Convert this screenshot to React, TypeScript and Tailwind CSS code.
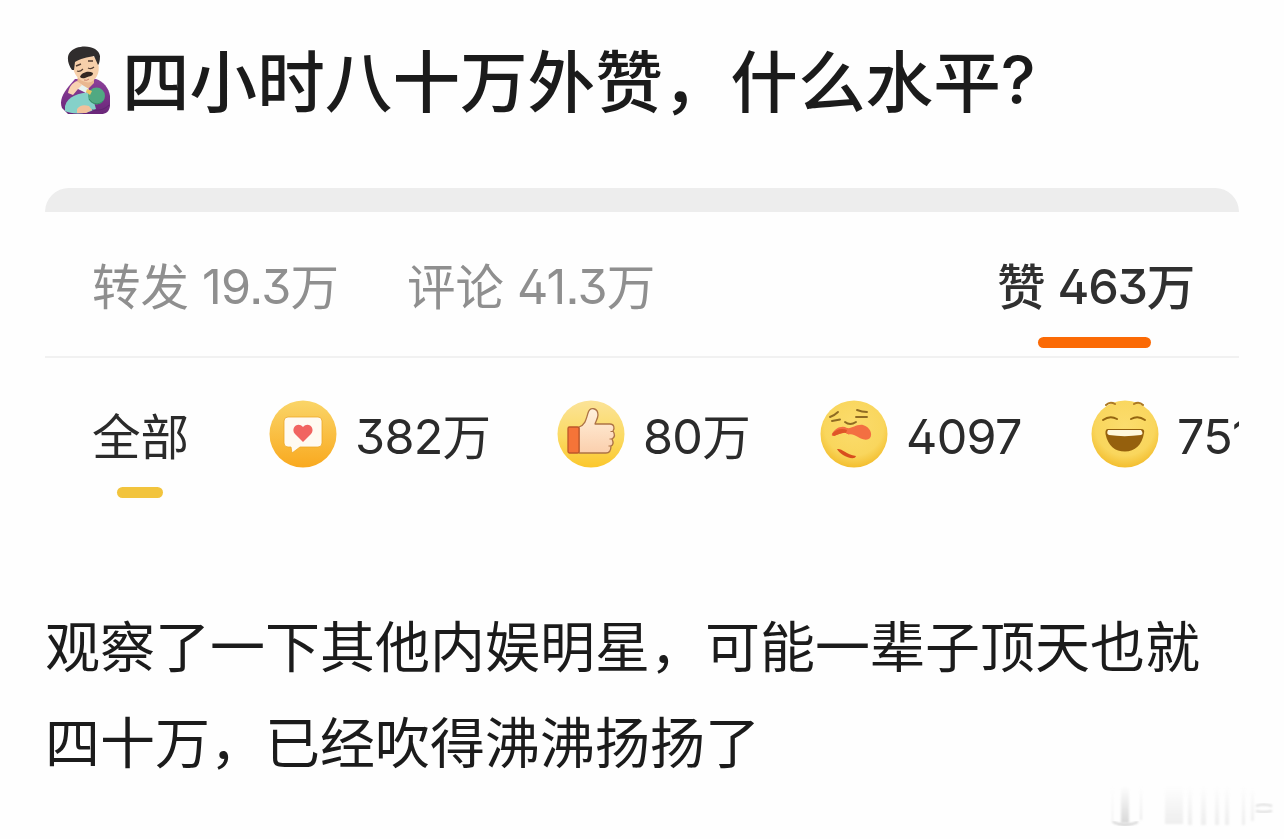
import type { ReactNode } from "react";

type TReaction = {
	icon: ReactNode;
	count: string;
	unit?: string;
	width: string;
};

const CJK = "font-['Noto_Sans_CJK_SC',sans-serif]";
const NUM = "font-[Inter,'Noto_Sans_CJK_SC',sans-serif] [font-feature-settings:'cv09','cv02','ss07']";

export default function App() {
	return (
		<main className={`h-[839px] w-[1284px] overflow-hidden bg-[#fefefe] ${CJK} text-[#1b1b1b]`}>
			<h1 className="flex h-[188px] items-start pl-[58px] pt-[29px] text-[67.6px] font-medium leading-[98px] whitespace-nowrap">
				<ParentIcon />
				<span className="ml-[8px]">四小时八十万外赞，什么水平</span>
				<span className="font-[Inter,sans-serif] text-[66px] leading-[102px]">?</span>
			</h1>

			<section className="ml-[45px] h-[397px] w-[1194px] overflow-hidden">
				<div className="h-[24px] rounded-t-[24px] bg-[#ededed]" />
				<Stats />
				<Reactions />
			</section>

			<p className="ml-[45px] mt-[10px] h-[191px] w-[1175px] text-[55px] leading-[96px]">
				观察了一下其他内娱明星，可能一辈子顶天也就四十万，已经吹得沸沸扬扬了
			</p>
			<Watermark />
		</main>
	);
}

function Stats() {
	return (
		<div className="flex h-[146px] items-start border-b-2 border-[#f1f1f1] pl-[47px] pt-[36px] text-[48.5px] leading-[72px] whitespace-nowrap text-[#8f8f8f]">
			<div className="flex w-[315px]">
				<span>转发</span>
				<span className={`ml-[13px] mt-[3px] tracking-[-0.7px] ${NUM}`}>19.3</span>
				<span>万</span>
			</div>
			<div className="flex w-[590px]">
				<span>评论</span>
				<span className={`ml-[13px] mt-[3px] tracking-[-0.8px] ${NUM}`}>41.3</span>
				<span>万</span>
			</div>
			<div className="relative flex font-medium text-[#303030]">
				<span>赞</span>
				<span className={`ml-[12px] mt-[3px] tracking-[-1.2px] ${NUM}`}>463</span>
				<span>万</span>
				<i className="absolute left-[41px] top-[89px] h-[11px] w-[113px] rounded-full bg-[#fb6a05]" />
			</div>
		</div>
	);
}

function Reactions() {
	return (
		<div className="flex h-[140px] items-start pl-[47px] pt-[40px] text-[48.5px] leading-[72px] whitespace-nowrap text-[#2b2b2b]">
			<div className="relative w-[177px] shrink-0">
				全部
				<i className="absolute left-[25px] top-[89px] h-[11px] w-[46px] rounded-full bg-[#f2c43d]" />
			</div>
			{REACTIONS.map((item) => (
				<div key={item.count} className={`flex shrink-0 ${item.width}`}>
					<svg className="mt-[2px] h-[68px] w-[68px] shrink-0" viewBox="0 0 68 68">
						{item.icon}
					</svg>
					<span className={`ml-[18px] mt-[3px] tracking-[-0.7px] ${NUM}`}>{item.count}</span>
					{item.unit && <span>{item.unit}</span>}
				</div>
			))}
		</div>
	);
}

function ParentIcon() {
	return (
		<svg className="mt-[16px] h-[70px] w-[56px] shrink-0" viewBox="0 0 56 70">
			<defs>
				<linearGradient id="shirt" x1="0" y1="0" x2="0" y2="1">
					<stop stopColor="#8b409a" />
					<stop offset="1" stopColor="#6a2679" />
				</linearGradient>
			</defs>
			<path d="M4 63C1 56 5 48 11 41L17 34L38 34C45 36 51 43 52 51L52 61C51 67 48 69 43 69H10Z" fill="url(#shirt)" />
			<path d="M20 29h16v9l-8 8-9-6Z" fill="#e9b790" />
			<path d="M15 13C18 8 36 8 39 15C43 24 40 34 33 37C26 39 17 33 15 23Z" fill="#f6cfaa" />
			<path d="M14 25C8 16 8 7 18 3C29-1 41 3 42 11C42 16 41 19 40 20L36 11C30 12 21 14 17 17L16 25Z" fill="#302d2d" />
			<path d="M18 21l5-2M30 16l5 0" fill="none" stroke="#523d31" strokeWidth="1.4" />
			<path d="M19 26c2 1 4 0 6-2M30 23c2 1 4 1 6-1" fill="none" stroke="#523d31" strokeWidth="1.1" />
			<path d="M22 32C23 28 30 25 35 28C35 32 30 31 27 33Q24 34 22 32Z" fill="#332722" />
			<path d="M26 35q3 1 5-1" fill="none" stroke="#c87e6c" />
			<path d="M7 61C10 51 20 48 33 47L38 64C27 70 13 69 7 66Z" fill="#85d1c9" />
			<circle cx="38.5" cy="51" r="8.5" fill="#50a982" />
			<path d="M31 54c4 6 10 6 14 2" fill="none" stroke="#368b69" />
			<path d="M21 38l10 6-3 4-10-5Z" fill="#e8f4f2" />
			<path d="M29 44l5 2-2 4-4-3Z" fill="#edc563" />
			<path d="M10 48C11 42 14 38 19 36L24 40L20 44L15 50Z" fill="#f8d2b1" />
			<path d="M19 64c4-5 8-4 12-3l3 4-6 3h-9Z" fill="#f2c19c" />
			<path d="M34 65c8 1 13-1 17-5" fill="none" stroke="#602471" />
		</svg>
	);
}

function HeartIcon() {
	return (
		<>
			<defs>
				<linearGradient id="orange" x1="0" y1="0" x2="0" y2="1">
					<stop stopColor="#fad568" />
					<stop offset="1" stopColor="#f9a91f" />
				</linearGradient>
			</defs>
			<circle cx="34" cy="34" r="33.5" fill="url(#orange)" />
			<path d="M19 17H49Q53 17 53 21V43Q53 47 49 47H31L23 53L22 47H19Q15 47 15 43V21Q15 17 19 17Z" fill="#fffaf1" stroke="#eda827" strokeWidth=".8" />
			<path d="M34 42L26 34C21 28 29 21 34 27C39 21 47 28 42 34Z" fill="#f16460" />
		</>
	);
}

function ThumbIcon() {
	return (
		<>
			<defs>
				<linearGradient id="yellow" x1="0" y1="0" x2="0" y2="1">
					<stop stopColor="#fbe398" />
					<stop offset=".55" stopColor="#fbda62" />
					<stop offset="1" stopColor="#fbc72c" />
				</linearGradient>
				<linearGradient id="hand" x1="0" y1="0" x2="0" y2="1">
					<stop stopColor="#fff1dc" />
					<stop offset="1" stopColor="#fbcfad" />
				</linearGradient>
			</defs>
			<circle cx="34" cy="34" r="33.5" fill="url(#yellow)" />
			<path d="M22 27C28 25 29 20 31 13C33 6 41 8 41 15C41 18 39 21 38 24H53C57 24 58 28 56 31C58 34 58 37 55 39C57 43 56 45 54 46C54 51 52 53 49 53H22Z" fill="url(#hand)" stroke="#ad7346" strokeWidth="1.3" strokeLinejoin="round" />
			<path d="M56 31.5h-2.5M55 39h-2.5M54 46h-2.5" stroke="#ad7346" />
			<rect x="11" y="27" width="11" height="26" rx="1.5" fill="#f57438" stroke="#bd562a" strokeWidth="1.3" />
		</>
	);
}

function FaceBase({ id }: { id: string }) {
	return (
		<>
			<defs>
				<radialGradient id={id} cx="50%" cy="38%" r="65%">
					<stop stopColor="#fbdc6d" />
					<stop offset=".68" stopColor="#f9d65d" />
					<stop offset="1" stopColor="#f2ba27" />
				</radialGradient>
			</defs>
			<circle cx="34" cy="34" r="33.5" fill={`url(#${id})`} />
		</>
	);
}

function CryIcon() {
	return (
		<>
			<FaceBase id="cry" />
			<path d="M10 17Q15 15 18 12M12 21L20 19.5M37 10Q42 12 47 12M36 17H47M25 22Q30 26 36 22" fill="none" stroke="#8f6b23" strokeWidth="1.9" strokeLinecap="round" />
			<path d="M12 34C15 28 22 25 27 28C32 29 36 24 43 25C50 27 53 34 50 38C46 42 40 38 34 35C30 33 28 36 26 33C22 32 18 35 14 36Q11 36 12 34Z" fill="#f36f42" />
			<path d="M12 34C16 29 22 28 27 30L26 33C22 32 18 35 14 36Z" fill="#df5527" />
			<path d="M17 49C22 48 25 54 36 56C35 60 28 58 23 55C20 53 18 51 17 49Z" fill="#d84e1d" />
		</>
	);
}

function LaughIcon() {
	return (
		<>
			<FaceBase id="laugh" />
			<path d="M15 5Q19 1 24 4M43 4Q48 1 52 5" fill="none" stroke="#ad7a25" strokeWidth="2" strokeLinecap="round" />
			<path d="M12 20Q19 15 26 19M40 19Q47 15 54 20" fill="none" stroke="#946510" strokeWidth="2" strokeLinecap="round" />
			<path d="M17 29H50Q54 29 53 33C51 45 44 51.5 34 51.5C24 51.5 17 46 14.5 34Q14 29 17 29Z" fill="#95600d" />
			<path d="M17 30H50Q53 34 50 35C39 36.5 28 36.5 18 35Q15 34 17 30Z" fill="#fff8dc" />
		</>
	);
}

function Watermark() {
	return (
		<svg className="ml-[1108px] h-[53px] w-[176px]" viewBox="0 0 176 53">
			<defs>
				<linearGradient id="mark" x1="0" y1="0" x2="0" y2="1">
					<stop stopColor="#d4d4d4" stopOpacity="0" />
					<stop offset="1" stopColor="#d4d4d4" />
				</linearGradient>
				<filter id="soft">
					<feGaussianBlur stdDeviation="1" />
				</filter>
			</defs>
			<g fill="url(#mark)" filter="url(#soft)">
				<path d="M13 0h8v37h-8Z" opacity=".9" />
				<path d="M4 0h1v37h-1ZM32 0h2v34h-2Z" opacity=".5" />
				<path d="M57 0h18v38H57ZM80 0h4v39h-4ZM93 0h5v39h-5ZM107 0h4v39h-4ZM117 0h4v39h-4ZM134 0h3v39h-3ZM143 4h3v31h-3Z" opacity=".4" />
			</g>
			<path d="M5 36Q17 42 30 36" fill="none" stroke="#c9c9c9" filter="url(#soft)" strokeWidth="1.8" />
			<path d="M148 20q7-3 16 0M148 25q7 2 16 0" fill="none" stroke="#d0d0d0" strokeWidth="1.5" filter="url(#soft)" />
		</svg>
	);
}

const REACTIONS: TReaction[] = [
	{ icon: <HeartIcon />, count: "382", unit: "万", width: "w-[288px]" },
	{ icon: <ThumbIcon />, count: "80", unit: "万", width: "w-[263px]" },
	{ icon: <CryIcon />, count: "4097", width: "w-[271px]" },
	{ icon: <LaughIcon />, count: "751", width: "w-[200px]" },
];
